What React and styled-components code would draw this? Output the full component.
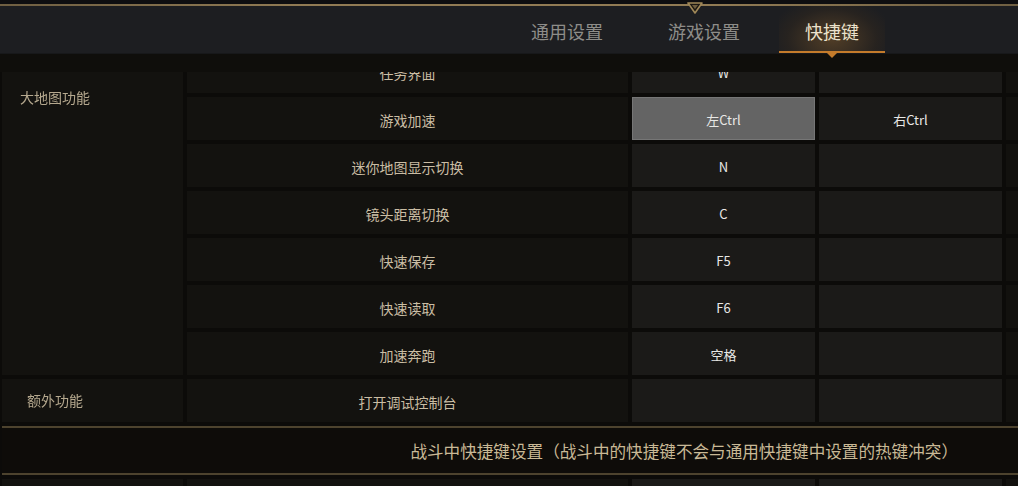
import React from 'react'
import styled, { createGlobalStyle } from 'styled-components'

const GlobalStyle = createGlobalStyle`
  html, body {
    margin: 0;
    padding: 0;
    background: #0c0b09;
  }
  body {
    font-family: "Noto Sans CJK SC", "Noto Sans", sans-serif;
  }
`

const Screen = styled.div`
  width: 1018px;
  height: 486px;
  overflow: hidden;
  display: flex;
  flex-direction: column;
  background: #0c0b09;
`

const Header = styled.header`
  position: relative;
  padding-top: 4px;
  background: #0e0e10;
`

const GoldRule = styled.div`
  height: 2px;
  background: linear-gradient(90deg, #6f5f42, #917b54 30%, #917b54 70%, #6f5f42);
`

const Ornament = styled.svg`
  position: absolute;
  left: 687px;
  top: 2px;
`

const TabBar = styled.nav`
  height: 47px;
  display: flex;
  justify-content: flex-end;
  gap: 13px;
  padding-right: 133px;
  background: #1d1e21;
  border-bottom: 1px solid #17181a;
`

const Tab = styled.div`
  position: relative;
  display: flex;
  align-items: center;
  padding: 2px 26px 0;
  font-size: 18px;
  color: ${p => (p.$active ? '#ece2cc' : '#8e8d89')};
  background: ${p =>
    p.$active
      ? 'radial-gradient(ellipse 60% 90% at 50% 70%, rgba(115, 82, 42, 0.6), rgba(62, 46, 28, 0.3) 70%, rgba(29, 30, 33, 0) 100%)'
      : 'transparent'};
  box-shadow: ${p => (p.$active ? 'inset 0 -2px 0 #c47b2b' : 'none')};

  &::after {
    content: '';
    display: ${p => (p.$active ? 'block' : 'none')};
    position: absolute;
    left: 50%;
    bottom: -5px;
    margin-left: -5px;
    border-left: 5px solid transparent;
    border-right: 5px solid transparent;
    border-top: 5px solid #c47b2b;
  }
`

const ScrollBand = styled.div`
  height: 18px;
  background: #0f0e0b;
`

const Viewport = styled.div`
  flex: 1;
  overflow: hidden;
`

const List = styled.div`
  display: flex;
  flex-direction: column;
  gap: 4px;
  padding-left: 2px;
  margin-top: ${p => -p.$scroll}px;
`

const Group = styled.section`
  display: grid;
  grid-template-columns: 181px 1fr;
  gap: 4px;
`

const GroupCell = styled.div`
  background: #13120f;
  padding-top: 11px;
`

const GroupLabel = styled.div`
  position: sticky;
  top: 15px;
  width: 106px;
  text-align: center;
  font-size: 14px;
  line-height: 20px;
  color: #b5a88e;
`

const Rows = styled.div`
  display: flex;
  flex-direction: column;
  gap: 4px;
`

const Row = styled.div`
  display: grid;
  grid-template-columns: 441px 183px 183px 1fr;
  gap: 4px;
  height: 43px;
`

const NameCell = styled.div`
  display: flex;
  align-items: center;
  justify-content: center;
  padding-top: 2px;
  background: #13120f;
  font-size: 14px;
  color: #cabda4;
`

const KeyCell = styled.div`
  display: flex;
  align-items: center;
  justify-content: center;
  box-sizing: border-box;
  padding-top: 2px;
  background: ${p => (p.$active ? '#646464' : '#1b1a18')};
  border: 1px solid ${p => (p.$active ? '#767676' : '#1b1a18')};
  font-size: 13px;
  color: #e8e8e6;
`

const EdgeCell = styled.div`
  background: #12110e;
`

const SectionBar = styled.div`
  height: 45px;
  display: flex;
  align-items: center;
  justify-content: flex-end;
  padding-right: 60px;
  background: #0e0c09;
  border-top: 2px solid #4d432e;
  border-bottom: 2px solid #4d432e;
  font-size: 16.6px;
  color: #c9b996;
`

const tabs = [
  { label: '通用设置' },
  { label: '游戏设置' },
  { label: '快捷键', active: true },
]

const mapRows = [
  { name: '任务界面', keys: ['W', ''] },
  { name: '游戏加速', keys: ['左Ctrl', '右Ctrl'], active: 0 },
  { name: '迷你地图显示切换', keys: ['N', ''] },
  { name: '镜头距离切换', keys: ['C', ''] },
  { name: '快速保存', keys: ['F5', ''] },
  { name: '快速读取', keys: ['F6', ''] },
  { name: '加速奔跑', keys: ['空格', ''] },
]

const extraRows = [{ name: '打开调试控制台', keys: ['', ''] }]

const battleRows = [{ name: '', keys: ['', ''] }]

const KeyGroup = ({ title, rows }) => (
  <Group>
    <GroupCell>
      <GroupLabel>{title}</GroupLabel>
    </GroupCell>
    <Rows>
      {rows.map((r, i) => (
        <Row key={i}>
          <NameCell>{r.name}</NameCell>
          {r.keys.map((k, j) => (
            <KeyCell key={j} $active={r.active === j}>
              {k}
            </KeyCell>
          ))}
          <EdgeCell />
        </Row>
      ))}
    </Rows>
  </Group>
)

const App = () => {
  return (
    <Screen>
      <GlobalStyle />
      <Header>
        <GoldRule />
        <Ornament width="16" height="13" viewBox="0 0 16 13">
          <polygon points="1,1 15,1 8,11" fill="#1c1812" stroke="#a08858" strokeWidth="1.6" strokeLinejoin="round" />
          <polygon points="5,3 11,3 8,7" fill="#6e5d3e" />
        </Ornament>
        <TabBar>
          {tabs.map(t => (
            <Tab key={t.label} $active={t.active}>
              {t.label}
            </Tab>
          ))}
        </TabBar>
      </Header>
      <ScrollBand />
      <Viewport>
        <List $scroll={22}>
          <KeyGroup title="大地图功能" rows={mapRows} />
          <KeyGroup title="额外功能" rows={extraRows} />
          <SectionBar>战斗中快捷键设置（战斗中的快捷键不会与通用快捷键中设置的热键冲突）</SectionBar>
          <KeyGroup title="" rows={battleRows} />
        </List>
      </Viewport>
    </Screen>
  )
}

export default App
